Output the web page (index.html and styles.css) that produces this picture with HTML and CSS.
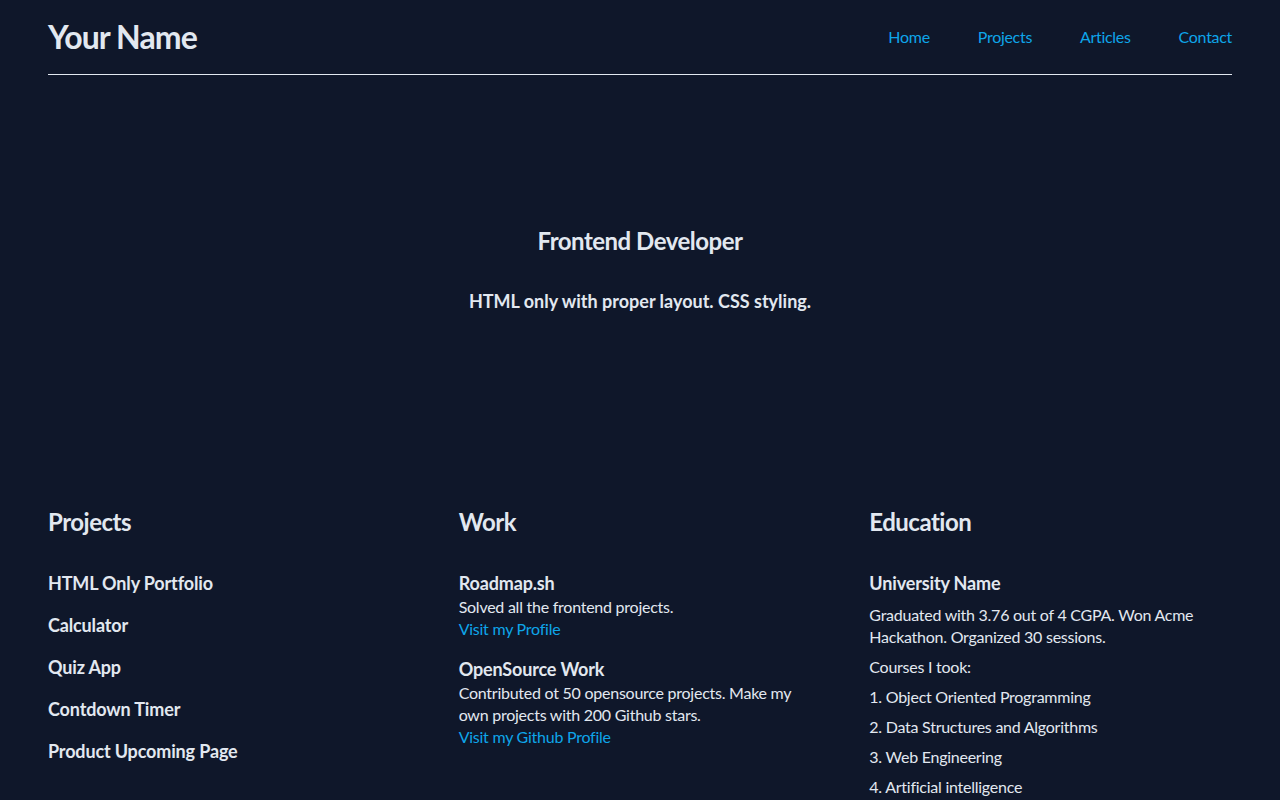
FILE: index.html
```html
<!DOCTYPE html>
<html lang="en">
<head>
<meta charset="utf-8">
<title>Your Name</title>
<link rel="stylesheet" href="styles.css">
</head>
<body>
<div class="page">
  <header class="site-header">
    <h1 class="logo">Your Name</h1>
    <nav class="nav">
      <a href="#">Home</a>
      <a href="#">Projects</a>
      <a href="#">Articles</a>
      <a href="#">Contact</a>
    </nav>
  </header>

  <section class="hero">
    <h2 class="hero-title">Frontend Developer</h2>
    <p class="hero-sub">HTML only with proper layout. CSS styling.</p>
  </section>

  <section class="columns">
    <div class="col">
      <h2 class="col-title">Projects</h2>
      <ul class="project-list">
        <li>HTML Only Portfolio</li>
        <li>Calculator</li>
        <li>Quiz App</li>
        <li>Contdown Timer</li>
        <li>Product Upcoming Page</li>
      </ul>
    </div>
    <div class="col">
      <h2 class="col-title">Work</h2>
      <div class="work-list">
        <div class="work-item">
          <h3 class="item-title">Roadmap.sh</h3>
          <p class="text">Solved all the frontend projects.</p>
          <a class="link" href="#">Visit my Profile</a>
        </div>
        <div class="work-item">
          <h3 class="item-title">OpenSource Work</h3>
          <p class="text">Contributed ot 50 opensource projects. Make my own projects with 200 Github stars.</p>
          <a class="link" href="#">Visit my Github Profile</a>
        </div>
      </div>
    </div>
    <div class="col">
      <h2 class="col-title">Education</h2>
      <div class="edu">
        <h3 class="item-title">University Name</h3>
        <p class="text">Graduated with 3.76 out of 4 CGPA. Won Acme Hackathon. Organized 30 sessions.</p>
        <p class="text">Courses I took:</p>
        <p class="text">1. Object Oriented Programming</p>
        <p class="text">2. Data Structures and Algorithms</p>
        <p class="text">3. Web Engineering</p>
        <p class="text">4. Artificial intelligence</p>
      </div>
    </div>
  </section>
</div>
</body>
</html>
```

FILE: styles.css
```css
* { box-sizing: border-box; }

html, body {
  margin: 0;
  padding: 0;
  background: #0f172a;
  color: #e2e8f0;
  font-family: "Lato", "Noto Sans", sans-serif;
  font-size: 16px;
}

.page {
  padding: 0 48px;
}

.site-header {
  display: flex;
  justify-content: space-between;
  align-items: center;
  padding: 16px 0;
  border-bottom: 1px solid #e2e8f0;
}

.logo {
  margin: 0;
  font-size: 32px;
  line-height: 42px;
  font-weight: 700;
  letter-spacing: -0.9px;
}

.nav {
  display: flex;
  gap: 48px;
}

.nav a {
  color: #0ea5e9;
  text-decoration: none;
  font-size: 16px;
  line-height: 22px;
  letter-spacing: -0.3px;
}

.hero {
  padding: 150px 0 150px;
  text-align: center;
}

.hero-title {
  margin: 0;
  font-size: 24px;
  line-height: 32px;
  font-weight: 700;
  letter-spacing: -0.5px;
}

.hero-sub {
  margin: 30px 0 0;
  font-size: 18px;
  line-height: 28px;
  font-weight: 700;
}

.columns {
  display: grid;
  grid-template-columns: repeat(3, 1fr);
  gap: 48px;
  padding-top: 41px;
}

.col-title {
  margin: 0 0 32px;
  font-size: 24px;
  line-height: 32px;
  font-weight: 700;
  letter-spacing: -0.5px;
}

.project-list {
  list-style: none;
  margin: 0;
  padding: 0;
  display: flex;
  flex-direction: column;
  gap: 16px;
}

.project-list li,
.item-title {
  margin: 0;
  font-size: 18px;
  line-height: 26px;
  font-weight: 700;
  letter-spacing: -0.15px;
}

.work-list {
  display: flex;
  flex-direction: column;
  gap: 16px;
}

.work-item {
  display: flex;
  flex-direction: column;
  align-items: flex-start;
}

.text {
  margin: 0;
  font-size: 16px;
  line-height: 22px;
  letter-spacing: -0.25px;
}

.link {
  color: #0ea5e9;
  text-decoration: none;
  line-height: 22px;
  letter-spacing: -0.25px;
}

.edu {
  display: flex;
  flex-direction: column;
  gap: 8px;
}
```
